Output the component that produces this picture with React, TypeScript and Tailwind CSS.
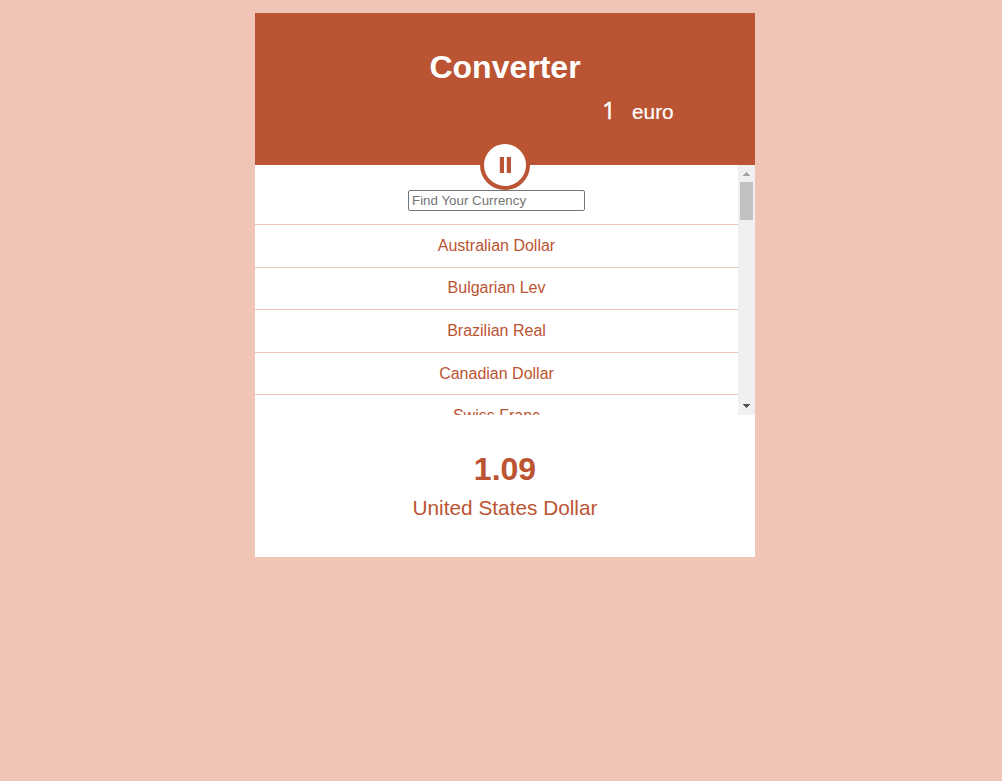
const currencies = [
  { name: "Australian Dollar", row: "h-[43px] pt-[12px]" },
  { name: "Bulgarian Lev", row: "h-[42px] pt-[11px]" },
  { name: "Brazilian Real", row: "h-[43px] pt-[12px]" },
  { name: "Canadian Dollar", row: "h-[42px] pt-[12px]" },
  { name: "Swiss Franc", row: "h-[43px] pt-[12px]" },
];

function SwapBadge() {
  return (
    <div className="absolute -bottom-[25px] left-1/2 z-10 flex size-[50px] -translate-x-1/2 items-center justify-center rounded-full border-4 border-[#bb5432] bg-white">
      <svg width="42" height="42" viewBox="0 0 42 42" fill="#bb5432">
        <rect x="15.8" y="13" width="4.2" height="16" />
        <rect x="22.8" y="13" width="4.2" height="16" />
      </svg>
    </div>
  );
}

function ScrollTrack() {
  return (
    <div className="flex w-[17px] shrink-0 flex-col items-center bg-[#f0f0f0]">
      <svg className="shrink-0" width="17" height="17" viewBox="0 0 17 17" fill="#a3a3a3" shapeRendering="crispEdges">
        <path d="M8 7h1v1h1v1h1v1h1v1H5v-1h1V9h1V8h1z" />
      </svg>
      <div className="h-[38px] w-[13px] bg-[#c1c1c1]" />
      <svg className="mt-auto shrink-0" width="17" height="17" viewBox="0 0 17 17" fill="#505050" shapeRendering="crispEdges">
        <path d="M5 6h7v1h-1v1h-1v1H9v1H8V9H7V8H6V7H5z" />
      </svg>
    </div>
  );
}

export default function App() {
  return (
    <main className="h-screen overflow-hidden bg-[#f0c5b6] pt-[13px] pl-[255px] font-['Liberation_Sans',Arial,sans-serif] text-[#bb5432]">
      <section className="w-[500px] bg-white">
        <header className="relative h-[152px] bg-[#bb5432] pt-[36px] text-white">
          <h1 className="text-center text-[32px] leading-[37px] font-bold">Converter</h1>
          <div className="mt-[10px] flex items-baseline pl-[347px] leading-[28px]">
            <span className="w-[30px] font-['Noto_Sans',sans-serif] text-[24px] [-webkit-text-stroke:0.3px_white]">1</span>
            <span className="text-[20.8px] [-webkit-text-stroke:0.2px_white]">euro</span>
          </div>
          <SwapBadge />
        </header>

        <div className="flex h-[250px] overflow-hidden">
          <div className="flex-1">
            <div className="flex h-[60px] justify-center border-b border-[#f0c5b6] pt-[25px]">
              <input
                className="h-[21px] w-[177px] rounded-[2px] border border-[#767676] bg-white px-[3px] text-[13.333px] text-black outline-none placeholder:text-[#757575]"
                placeholder="Find Your Currency"
              />
            </div>
            <ul className="text-center text-[16px] leading-[18px]">
              {currencies.map((c) => (
                <li key={c.name} className={`${c.row} border-b border-[#f0c5b6]`}>
                  {c.name}
                </li>
              ))}
            </ul>
          </div>
          <ScrollTrack />
        </div>

        <footer className="h-[142px] pt-[36px] text-center">
          <p className="text-[32px] leading-[37px] font-bold">1.09</p>
          <p className="mt-[8px] text-[20.8px] leading-[24px]">United States Dollar</p>
        </footer>
      </section>
    </main>
  );
}
